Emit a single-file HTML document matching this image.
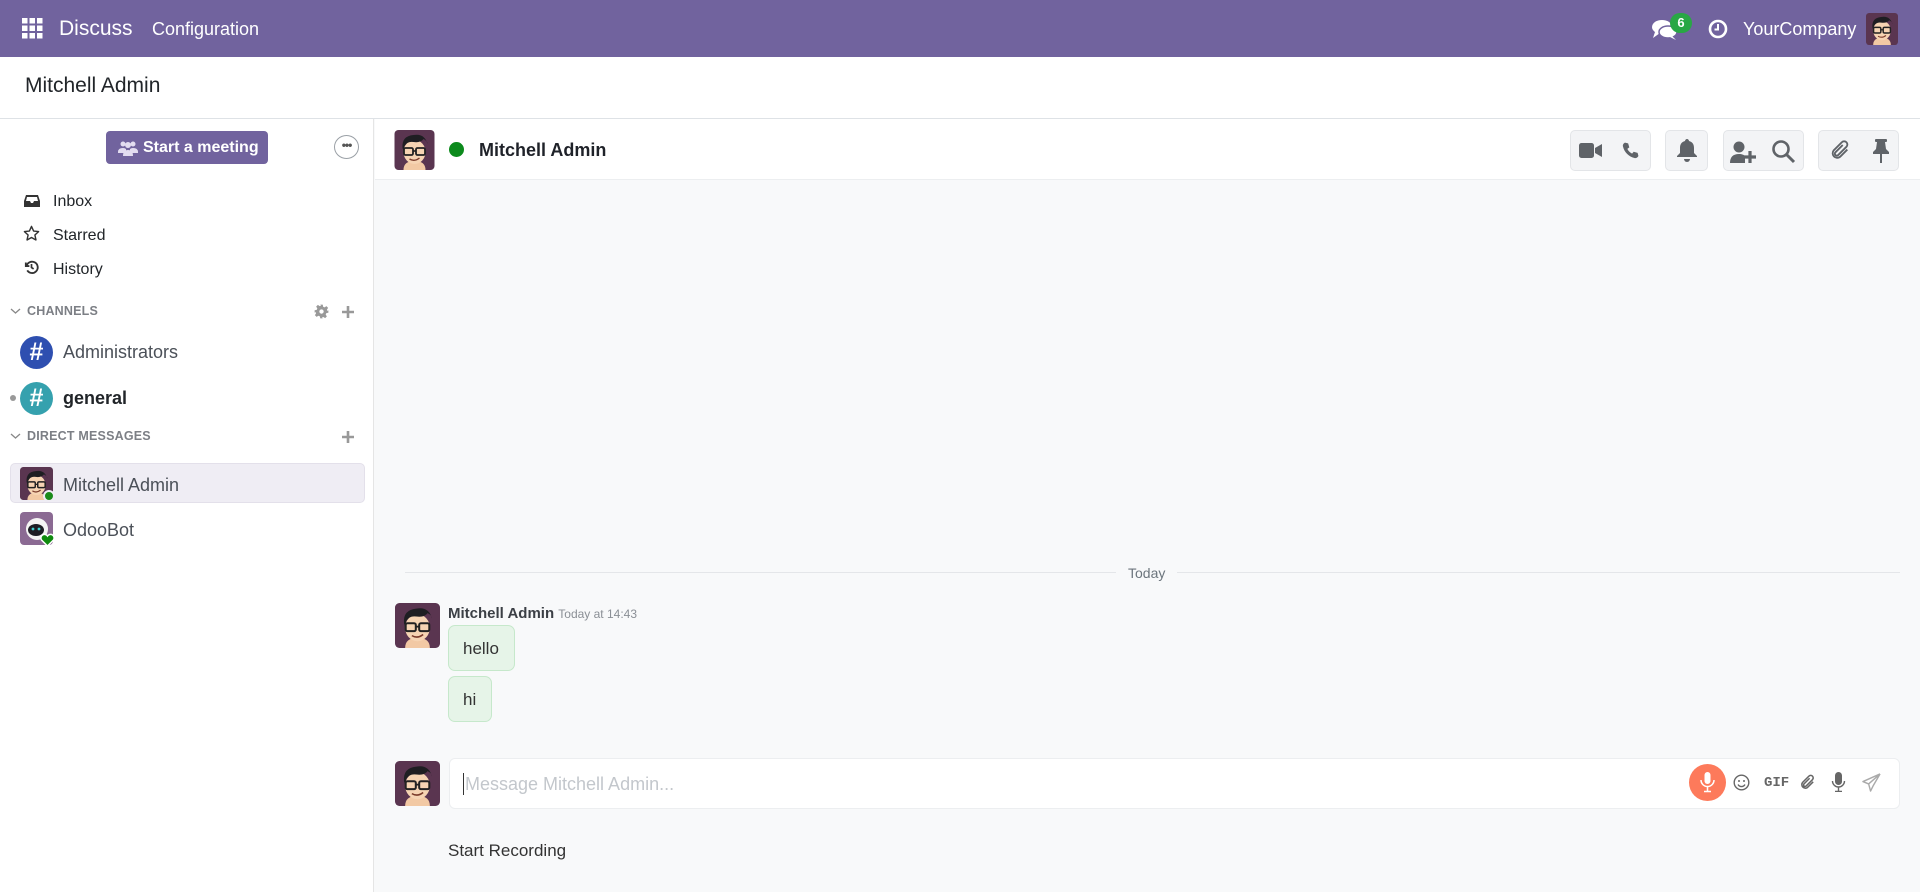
<!DOCTYPE html>
<html><head><meta charset="utf-8">
<style>
*{box-sizing:border-box;margin:0;padding:0}
body{width:1920px;height:892px;overflow:hidden;font-family:"Liberation Sans",sans-serif;background:#f8f9fa;position:relative;color:#212529}
.abs{position:absolute}
.nav{left:0;top:0;width:1920px;height:57px;background:#71639e;color:#fff}
.cp{left:0;top:57px;width:1920px;height:62px;background:#fff;border-bottom:1px solid #dee2e6}
.side{left:0;top:119px;width:374px;height:773px;background:#fff;border-right:1px solid #e5e5e5}
.hdr{left:375px;top:119px;width:1545px;height:61px;background:#fff;border-bottom:1px solid #eceef0}
.btng{top:130px;height:41px;background:#f3f4f6;border:1px solid #e3e5e8;border-radius:5px}
.lbl{font-size:16px;color:#212529}
.sec{font-size:12.5px;font-weight:bold;color:#7c7f85;letter-spacing:.2px}
</style></head><body>
<svg width="0" height="0" style="position:absolute">
<defs>
<symbol id="av" viewBox="0 0 40 40">
<rect width="40" height="40" rx="4" fill="#5a3550"/>
<path d="M9 40 Q9 31 20 31 Q31 31 31 40Z" fill="#f2c9a4"/>
<ellipse cx="20" cy="22" rx="11" ry="12" fill="#f6d4b3"/>
<path d="M8 18 Q7 6 19 5 Q30 3 33 14 Q33 11 29 9 Q26 13 19 12 Q13 11 10 16 L9 21Z" fill="#1e1e22"/>
<rect x="9.5" y="18" width="9" height="7" rx="1.5" fill="none" stroke="#222" stroke-width="1.8"/>
<rect x="21.5" y="18" width="9" height="7" rx="1.5" fill="none" stroke="#222" stroke-width="1.8"/>
<path d="M18.5 21h3" stroke="#222" stroke-width="1.6"/>
<path d="M15 29 Q20 32 25 28" stroke="#7a3b2a" stroke-width="1.4" fill="none"/>
</symbol>
</defs>
</svg>

<div class="abs nav">
 <svg class="abs" style="left:22px;top:18px" width="21" height="21" viewBox="0 0 21 21" fill="#fff">
  <rect x="0" y="0" width="5.5" height="5.5"/><rect x="7.5" y="0" width="5.5" height="5.5"/><rect x="15" y="0" width="5.5" height="5.5"/>
  <rect x="0" y="7.5" width="5.5" height="5.5"/><rect x="7.5" y="7.5" width="5.5" height="5.5"/><rect x="15" y="7.5" width="5.5" height="5.5"/>
  <rect x="0" y="15" width="5.5" height="5.5"/><rect x="7.5" y="15" width="5.5" height="5.5"/><rect x="15" y="15" width="5.5" height="5.5"/>
 </svg>
 <div class="abs" style="left:59px;top:17px;font-size:21px">Discuss</div>
 <div class="abs" style="left:152px;top:19px;font-size:18px">Configuration</div>
 <svg class="abs" style="left:1652px;top:19px" width="26" height="22" viewBox="0 0 26 22" fill="#fff">
  <ellipse cx="10" cy="8" rx="10" ry="7"/><path d="M3 13 L1 19 L8 14Z"/>
  <ellipse cx="16" cy="13" rx="9" ry="6" fill="#fff" stroke="#71639e" stroke-width="1.5"/><path d="M20 17 L24 21 L18 18Z"/>
 </svg>
 <div class="abs" style="left:1670px;top:13px;width:22px;height:20px;border-radius:10px;background:#28a745;color:#fff;font-size:13px;font-weight:bold;text-align:center;line-height:20px">6</div>
 <svg class="abs" style="left:1708px;top:19px" width="20" height="20" viewBox="0 0 20 20"><circle cx="10" cy="10" r="8" fill="none" stroke="#fff" stroke-width="2.6"/><path d="M10 5v5.5h-3.5" stroke="#fff" stroke-width="2" fill="none"/></svg>
 <div class="abs" style="left:1743px;top:19px;font-size:18px">YourCompany</div>
 <svg class="abs" style="left:1866px;top:13px" width="32" height="32"><use href="#av"/></svg>
</div>

<div class="abs cp"><div class="abs" style="left:25px;top:17px;font-size:21px;color:#212529">Mitchell Admin</div></div>

<div class="abs side">
 <div class="abs" style="left:106px;top:12px;width:162px;height:33px;background:#71639e;border-radius:4px;color:#fff;font-weight:bold;font-size:16px;line-height:33px;padding-left:37px">Start a meeting</div>
 <svg class="abs" style="left:118px;top:21px" width="20" height="16" viewBox="0 0 20 16" fill="#e2dcf0"><circle cx="5" cy="4" r="2.5"/><circle cx="15" cy="4" r="2.5"/><circle cx="10" cy="5" r="3"/><path d="M0 12 Q0 8 5 8 Q7 8 8 9 L8 13H0Z"/><path d="M20 12 Q20 8 15 8 Q13 8 12 9 L12 13H20Z"/><path d="M5 16 Q5 10 10 10 Q15 10 15 16Z"/></svg>
 <div class="abs" style="left:334px;top:16px;width:25px;height:24px;border:1px solid #9aa0a6;border-radius:50%;text-align:center;font-size:12px;line-height:18px;color:#555;font-weight:bold;letter-spacing:-1px">•••</div>

 <svg class="abs" style="left:24px;top:75px" width="16" height="14" viewBox="0 0 16 14"><path d="M2 1h12l2 6v6H0V7z" fill="#333"/><path d="M3 3h10l1 4h-4l-1 2H7L6 7H2z" fill="#fff"/></svg>
 <div class="abs lbl" style="left:53px;top:74px">Inbox</div>
 <svg class="abs" style="left:23px;top:106px" width="17" height="17" viewBox="0 0 24 24"><path d="M12 2l3 6.5 7 .8-5.2 4.8 1.5 7L12 17.6 5.7 21.1l1.5-7L2 9.3l7-.8z" fill="none" stroke="#333" stroke-width="2" stroke-linejoin="round"/></svg>
 <div class="abs lbl" style="left:53px;top:108px">Starred</div>
 <svg class="abs" style="left:23px;top:140px" width="17" height="17" viewBox="0 0 24 24"><path d="M4 5v5h5" stroke="#333" stroke-width="2.6" fill="none"/><path d="M5 10a8 8 0 1 1 1 6" stroke="#333" stroke-width="2.6" fill="none"/><path d="M12 7v5l3 2" stroke="#333" stroke-width="2.4" fill="none"/></svg>
 <div class="abs lbl" style="left:53px;top:142px">History</div>

 <svg class="abs" style="left:10px;top:188px" width="11" height="8" viewBox="0 0 11 8"><path d="M1 2l4.5 4L10 2" stroke="#888" stroke-width="1.3" fill="none"/></svg>
 <div class="abs sec" style="left:27px;top:185px">CHANNELS</div>
 <svg class="abs" style="left:314px;top:185px" width="15" height="15" viewBox="0 0 24 24"><path fill="#999" d="M10 1h4l.6 3.3 2.4 1 2.8-1.9 2.8 2.8-1.9 2.8 1 2.4L23 10v4l-3.3.6-1 2.4 1.9 2.8-2.8 2.8-2.8-1.9-2.4 1L14 23h-4l-.6-3.3-2.4-1-2.8 1.9-2.8-2.8 1.9-2.8-1-2.4L1 14v-4l3.3-.6 1-2.4L3.4 4.2 6.2 1.4 9 3.3l2.4-1z"/><circle cx="12" cy="12" r="3.5" fill="#fff"/></svg>
 <svg class="abs" style="left:341px;top:186px" width="14" height="14" viewBox="0 0 14 14"><path d="M7 1v12M1 7h12" stroke="#999" stroke-width="2.6"/></svg>

 <div class="abs" style="left:20px;top:217px;width:33px;height:33px;border-radius:50%;background:#2e4fb0;color:#fff;font-weight:bold;font-size:25px;text-align:center;line-height:33px">#</div>
 <div class="abs" style="left:63px;top:223px;font-size:18px;color:#4b5058">Administrators</div>
 <div class="abs" style="left:10px;top:276px;width:6px;height:6px;border-radius:50%;background:#999"></div>
 <div class="abs" style="left:20px;top:263px;width:33px;height:33px;border-radius:50%;background:#35a1ae;color:#fff;font-weight:bold;font-size:25px;text-align:center;line-height:33px">#</div>
 <div class="abs" style="left:63px;top:269px;font-size:18px;font-weight:bold;color:#212529">general</div>

 <svg class="abs" style="left:10px;top:313px" width="11" height="8" viewBox="0 0 11 8"><path d="M1 2l4.5 4L10 2" stroke="#888" stroke-width="1.3" fill="none"/></svg>
 <div class="abs sec" style="left:27px;top:310px">DIRECT MESSAGES</div>
 <svg class="abs" style="left:341px;top:311px" width="14" height="14" viewBox="0 0 14 14"><path d="M7 1v12M1 7h12" stroke="#999" stroke-width="2.6"/></svg>

 <div class="abs" style="left:10px;top:344px;width:355px;height:40px;background:#efedf4;border:1px solid #e3e0ea;border-radius:5px"></div>
 <svg class="abs" style="left:20px;top:348px" width="33" height="33"><use href="#av"/></svg>
 <div class="abs" style="left:43px;top:371px;width:12px;height:12px;border-radius:50%;background:#1a8a1a;border:2px solid #efedf4"></div>
 <div class="abs" style="left:63px;top:356px;font-size:18px;color:#4b5058">Mitchell Admin</div>

 <svg class="abs" style="left:20px;top:393px" width="33" height="33" viewBox="0 0 33 33"><rect width="33" height="33" rx="4" fill="#8b6a93"/><circle cx="17" cy="17" r="11" fill="#f4f4f4"/><ellipse cx="16" cy="18" rx="8" ry="6" fill="#1d1d24"/><circle cx="13" cy="17" r="1.4" fill="#3fd0d0"/><circle cx="19" cy="17" r="1.4" fill="#3fd0d0"/></svg>
 <svg class="abs" style="left:40px;top:414px" width="15" height="14" viewBox="0 0 15 14"><path d="M7.5 13L1.5 7a3.3 3.3 0 0 1 6-4 3.3 3.3 0 0 1 6 4z" fill="#0f8a0f" stroke="#fff" stroke-width="1.5"/></svg>
 <div class="abs" style="left:63px;top:401px;font-size:18px;color:#4b5058">OdooBot</div>
</div>

<div class="abs hdr">
 <svg class="abs" style="left:19px;top:11px" width="41" height="40"><use href="#av"/></svg>
 <div class="abs" style="left:74px;top:23px;width:15px;height:15px;border-radius:50%;background:#0c8a1c"></div>
 <div class="abs" style="left:104px;top:21px;font-size:18px;font-weight:bold;color:#1f2229">Mitchell Admin</div>
</div>
<div class="abs btng" style="left:1570px;width:81px"></div>
<div class="abs btng" style="left:1665px;width:43px"></div>
<div class="abs btng" style="left:1723px;width:81px"></div>
<div class="abs btng" style="left:1818px;width:81px"></div>
<svg class="abs" style="left:1579px;top:142px" width="24" height="17" viewBox="0 0 24 17" fill="#5f6368"><rect x="0" y="1" width="15" height="15" rx="2.5"/><path d="M16 6l7-4v13l-7-4z"/></svg>
<svg class="abs" style="left:1621px;top:141px" width="19" height="19" viewBox="0 0 24 24"><path d="M5 2l4 1 1.5 5-2.5 2a13 13 0 0 0 6 6l2-2.5 5 1.5 1 4c-1 2-3 3-5 2.5C10 20 4 14 2.5 7 2 5 3 3 5 2z" fill="#5f6368"/></svg>
<svg class="abs" style="left:1676px;top:138px" width="22" height="24" viewBox="0 0 22 24" fill="#5f6368"><path d="M11 1c1 0 2 1 2 2 4 1 5 4 5 7v5l3 3v1H1v-1l3-3v-5c0-3 1-6 5-7 0-1 1-2 2-2z"/><path d="M8 21h6a3 3 0 0 1-6 0z"/></svg>
<svg class="abs" style="left:1730px;top:141px" width="28" height="22" viewBox="0 0 28 22" fill="#5f6368"><circle cx="9" cy="6" r="5.5"/><path d="M0 22c0-6 3-9 9-9 3 0 5 1 6 2v7z"/><path d="M20 10v12M14 16h12" stroke="#5f6368" stroke-width="3.2"/></svg>
<svg class="abs" style="left:1771px;top:139px" width="25" height="25" viewBox="0 0 25 25"><circle cx="10" cy="10" r="7.5" fill="none" stroke="#5f6368" stroke-width="2.6"/><path d="M15.5 15.5L23 23" stroke="#5f6368" stroke-width="3"/></svg>
<svg class="abs" style="left:1829px;top:139px" width="22" height="23" viewBox="0 0 24 24"><path d="M20 11l-8 8a5 5 0 0 1-7-7l9-9a3.5 3.5 0 0 1 5 5l-9 9a2 2 0 0 1-3-3l8-8" fill="none" stroke="#5f6368" stroke-width="2"/></svg>
<svg class="abs" style="left:1872px;top:139px" width="18" height="25" viewBox="0 0 18 25" fill="#5f6368"><rect x="3" y="0" width="12" height="3" rx="1"/><path d="M5 3h8l1 7 3 3v2H1v-2l3-3z"/><rect x="8" y="15" width="2" height="9"/></svg>

<div class="abs" style="left:405px;top:572px;width:1495px;height:1px;background:#e4e6e9"></div>
<div class="abs" style="left:1116px;top:565px;padding:0 12px;background:#f8f9fa;font-size:14px;color:#6c757d">Today</div>

<svg class="abs" style="left:395px;top:603px" width="45" height="45"><use href="#av"/></svg>
<div class="abs" style="left:448px;top:605px;font-size:15px;font-weight:bold;color:#3b3f45">Mitchell Admin <span style="font-weight:normal;font-size:12px;color:#8a8f95">Today at 14:43</span></div>
<div class="abs" style="left:448px;top:625px;width:67px;height:46px;background:#e6f4e8;border:1px solid #c6e8cb;border-radius:7px;font-size:17px;line-height:46px;padding-left:14px;color:#333">hello</div>
<div class="abs" style="left:448px;top:676px;width:44px;height:46px;background:#e6f4e8;border:1px solid #c6e8cb;border-radius:7px;font-size:17px;line-height:46px;padding-left:14px;color:#333">hi</div>

<svg class="abs" style="left:395px;top:761px" width="45" height="45"><use href="#av"/></svg>
<div class="abs" style="left:449px;top:758px;width:1451px;height:51px;background:#fff;border:1px solid #eceef0;border-radius:6px"></div>
<div class="abs" style="left:463px;top:773px;width:1px;height:22px;background:#333"></div>
<div class="abs" style="left:465px;top:774px;font-size:18px;color:#c3c7cc">Message Mitchell Admin...</div>
<div class="abs" style="left:1689px;top:764px;width:37px;height:37px;border-radius:50%;background:#fd7a5b"></div>
<svg class="abs" style="left:1698px;top:771px" width="19" height="22" viewBox="0 0 19 22"><rect x="6.5" y="1" width="6" height="12" rx="3" fill="#fff"/><path d="M3 9a6.5 6.5 0 0 0 13 0M9.5 16v4M6 20.5h7" stroke="#fff" stroke-width="1.5" fill="none"/></svg>
<svg class="abs" style="left:1733px;top:774px" width="17" height="17" viewBox="0 0 17 17"><circle cx="8.5" cy="8.5" r="7.3" fill="none" stroke="#666" stroke-width="1.4"/><circle cx="6" cy="7" r="1" fill="#666"/><circle cx="11" cy="7" r="1" fill="#666"/><path d="M5 10.5a4 4 0 0 0 7 0" stroke="#666" stroke-width="1.3" fill="none"/></svg>
<div class="abs" style="left:1764px;top:775px;font-family:'Liberation Mono',monospace;font-size:14px;color:#666;font-weight:bold">GIF</div>
<svg class="abs" style="left:1799px;top:774px" width="17" height="17" viewBox="0 0 24 24"><path d="M20 11l-8 8a5 5 0 0 1-7-7l9-9a3.5 3.5 0 0 1 5 5l-9 9a2 2 0 0 1-3-3l8-8" fill="none" stroke="#666" stroke-width="2.2"/></svg>
<svg class="abs" style="left:1831px;top:772px" width="15" height="20" viewBox="0 0 15 20"><rect x="4" y="0" width="7" height="13" rx="3.5" fill="#666"/><path d="M1.5 9a6 6 0 0 0 12 0M7.5 15v4M4 19.5h7" stroke="#666" stroke-width="1.4" fill="none"/></svg>
<svg class="abs" style="left:1862px;top:773px" width="19" height="19" viewBox="0 0 20 20"><path d="M19 1L1 9l6 2.5L9 19l3-6 M19 1L7 11.5 M19 1l-7 12" stroke="#aaa" stroke-width="1.5" fill="none" stroke-linejoin="round"/></svg>

<div class="abs" style="left:448px;top:841px;font-size:17px;color:#333">Start Recording</div>
</body></html>
